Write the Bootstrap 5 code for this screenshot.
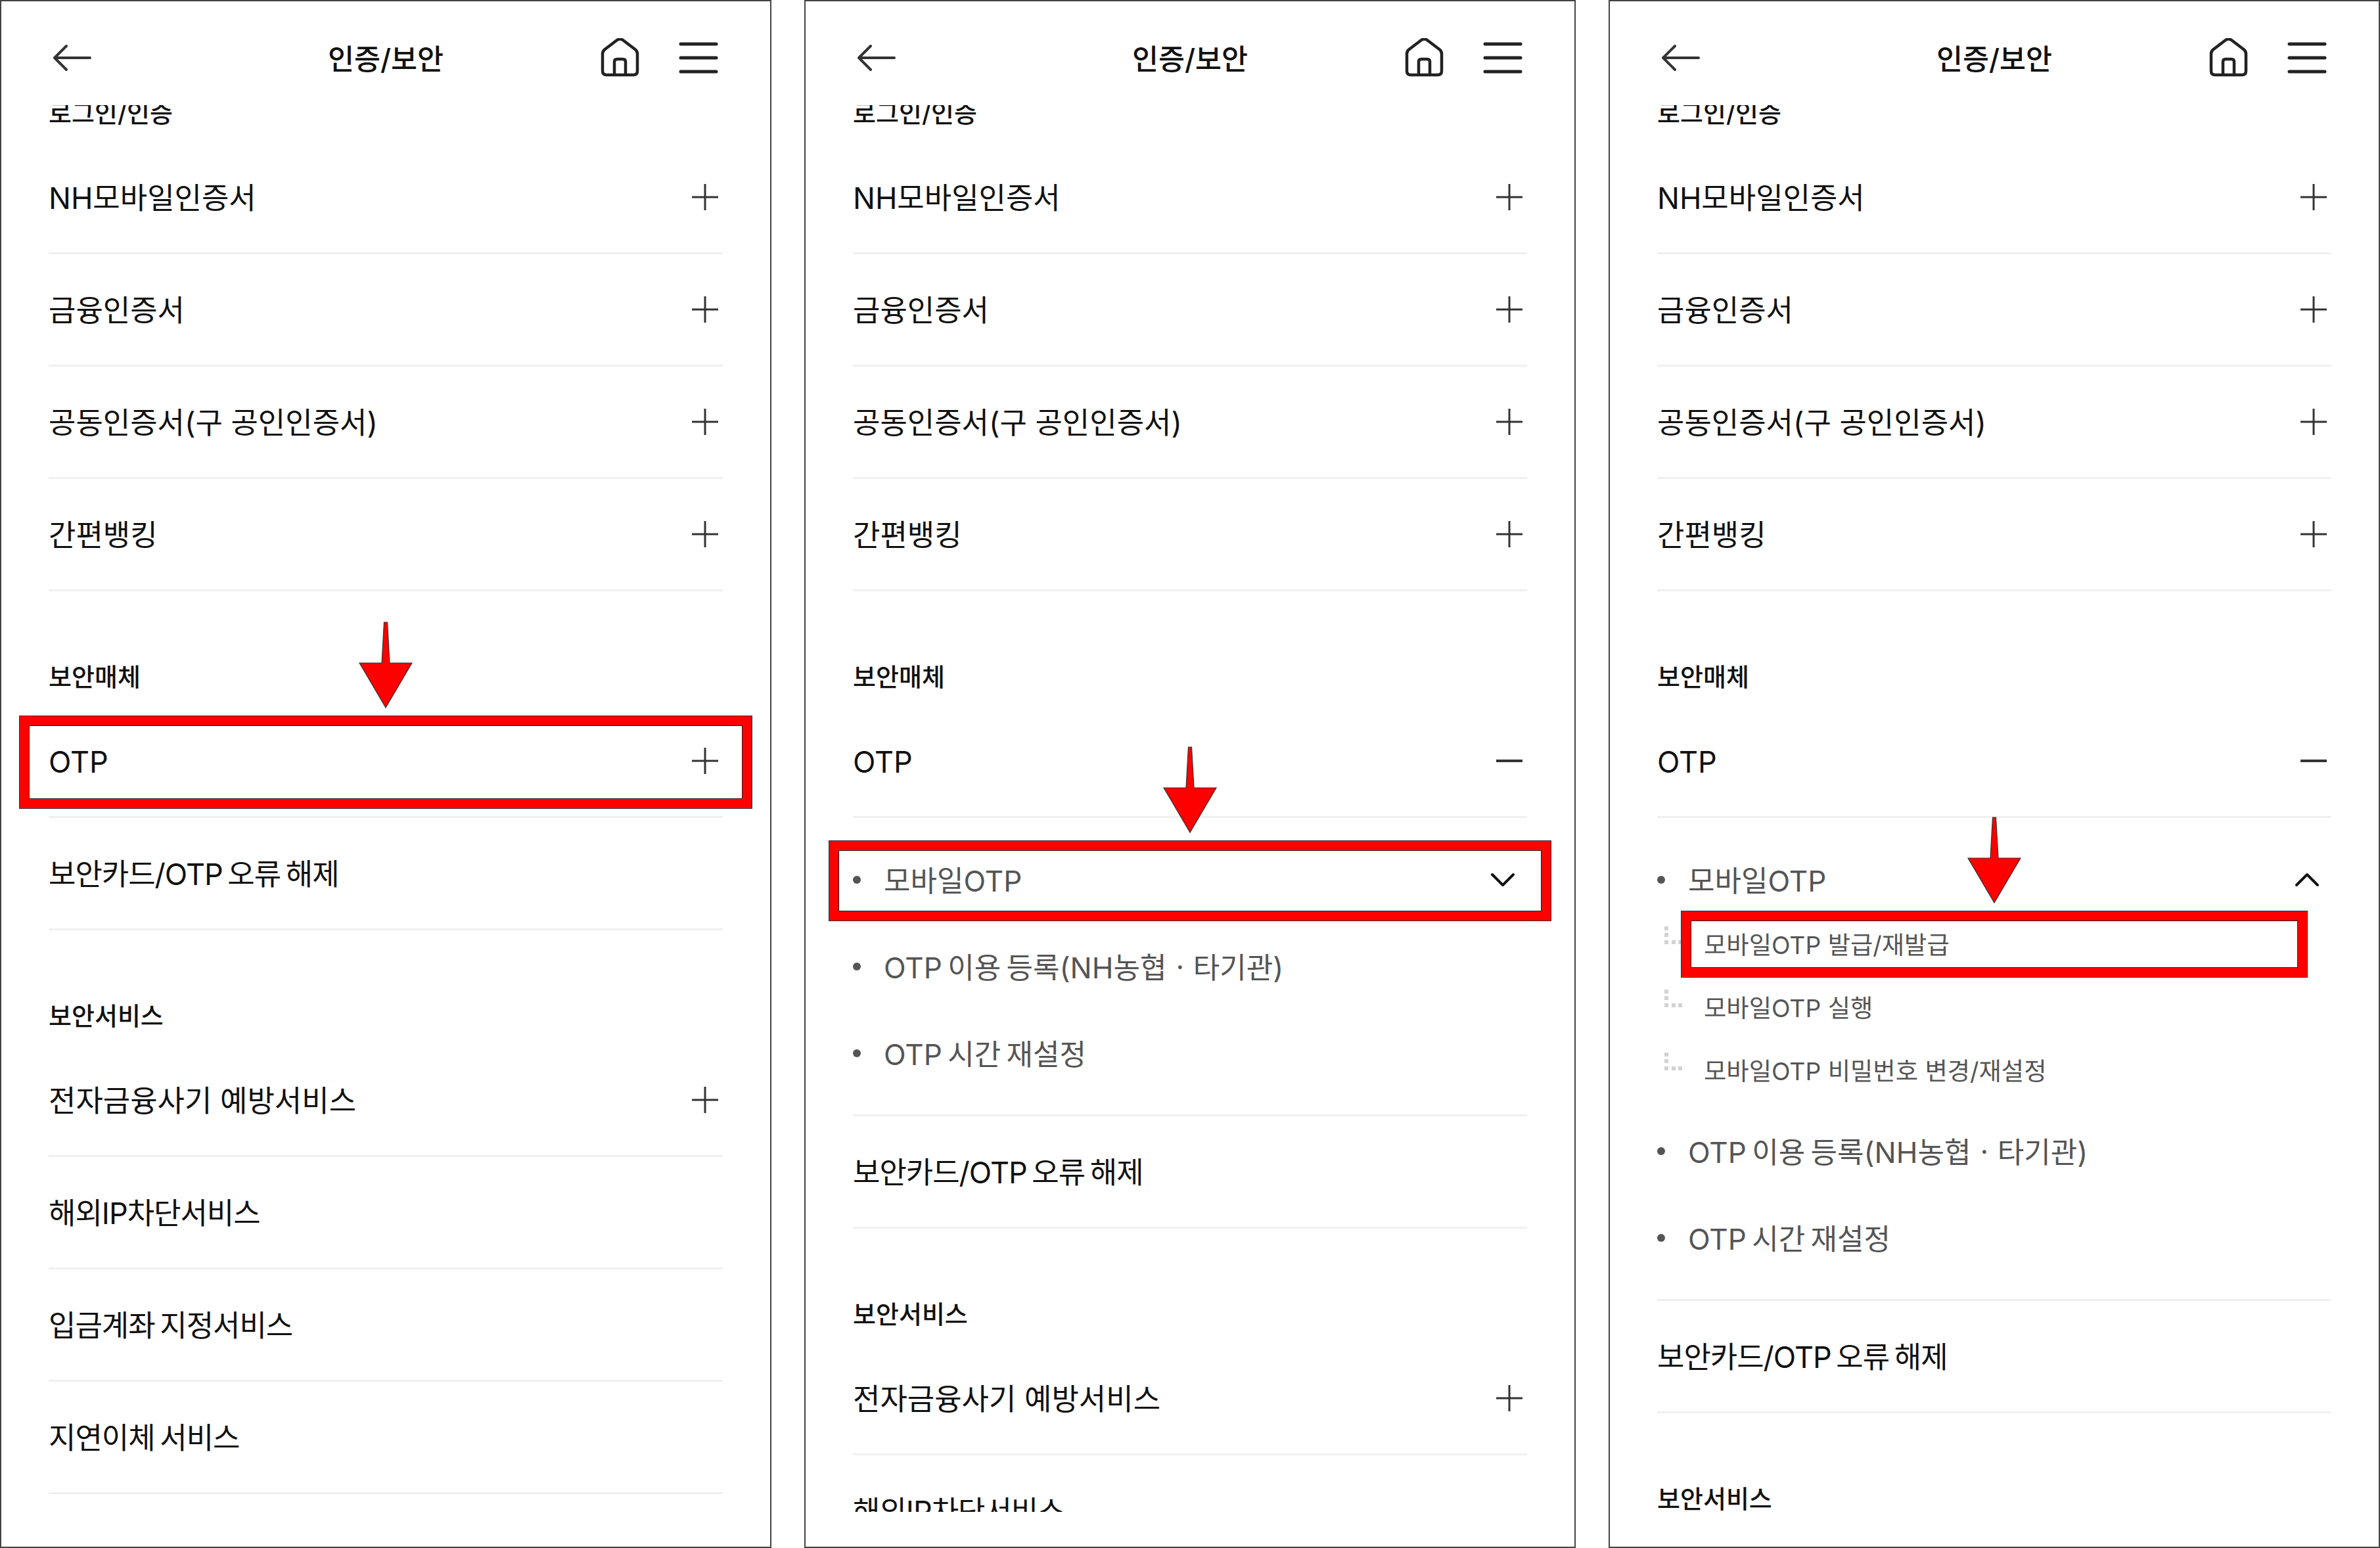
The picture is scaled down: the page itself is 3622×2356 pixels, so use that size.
<!DOCTYPE html>
<html lang="ko">
<head>
<meta charset="utf-8">
<title>인증/보안</title>
<link href="https://cdn.jsdelivr.net/npm/bootstrap@5.3.0/dist/css/bootstrap.min.css" rel="stylesheet">
<style>
html,body{margin:0;background:#fff}
body{font-family:Inter,"Noto Sans CJK KR","Noto Sans",sans-serif;color:#111}
.screens{width:3622px;height:2356px}
.phone{width:1174px;height:2356px;border:2px solid #444;padding-bottom:53px;background:#fff}
.topbar{height:158px;padding:14px 79px 0;flex:none;background:#fff;position:relative}
.bar-title{font-size:43.5px;font-weight:500;line-height:60px;color:#111;position:absolute;left:0;right:0;top:58px;text-align:center}
.bar-icons{gap:59px}
.viewport{flex:1 1 auto;overflow:hidden}
.scrolled{margin-top:-118px}
.sec-head{height:174px;padding:100px 72px 0;font-size:38px;font-weight:500;line-height:60px;color:#111}
.acc-row{height:171px;margin:0 72px;border-bottom:3px solid #f0f0f0;font-size:45px;line-height:60px;color:#111;padding-right:7px;word-spacing:-4px}
.acc-row span,.sub-row span{padding-top:4px}
.tight{letter-spacing:-1px}
.acc-row .roomy{word-spacing:0}
.sub-group{margin:0 72px;border-bottom:3px solid #f0f0f0;padding:28px 0 27px}
.sub-row{height:132px;font-size:44px;line-height:60px;color:#555;padding-right:18px;word-spacing:-4px}
.dot{width:12px;height:12px;border-radius:50%;background:#555;margin-right:35px;flex:none}
.deep{margin-top:-16px;padding-bottom:9px}
.deep-row{height:96px;font-size:37.3px;line-height:50px;color:#555;padding-left:11px}
.deep-row svg{margin-top:21px;margin-right:32px;flex:none}
.deep-row span{padding-top:25px}
.red-box{position:absolute;border:14px solid #f00;outline:1px solid #333;box-shadow:inset 0 0 0 1px #222}
.box-a{left:28px;top:1088px;width:1114px;height:140px}
.box-b{left:36px;top:1278px;width:1098px;height:121px}
.box-c{left:109px;top:1385px;width:952px;height:100px}
.red-arrow{position:absolute;left:543px}
.arrow-a{top:943px}
.arrow-b{top:1133px}
.arrow-c{top:1240px}
</style>
</head>
<body>
<div class="screens d-flex justify-content-between">

<section class="phone position-relative d-flex flex-column">
  <header class="topbar d-flex align-items-center justify-content-between">
    <svg width="62" height="44" viewBox="0 0 62 44" fill="none" stroke="#333" stroke-width="4" stroke-linecap="round" stroke-linejoin="round"><path d="M2 22H56M20 4 2 22 20 40"/></svg>
    <div class="bar-title">인증/보안</div>
    <div class="bar-icons d-flex align-items-center">
      <svg width="60" height="60" viewBox="0 0 60 60" fill="none" stroke="#222" stroke-width="4.5" stroke-linejoin="round"><path d="M3 50V24q0-4 3-6.5L25 3q4.5-3 9 0l19 14.5q3 2.5 3 6.5v26q0 6-6 6H9q-6 0-6-6Z"/><path d="M21 55V36q0-4 4-4h9q4 0 4 4v19"/></svg>
      <svg width="60" height="48" viewBox="0 0 60 48" fill="none" stroke="#222" stroke-width="5" stroke-linecap="round"><path d="M3 3H57M3 24H57M3 45H57"/></svg>
    </div>
  </header>
  <div class="viewport"><div class="scrolled">
    <div class="sec-head">로그인/인증</div>
    <div class="acc-row d-flex align-items-center justify-content-between"><span>NH모바일인증서</span><svg width="40" height="40" viewBox="0 0 40 40" stroke="#333" stroke-width="3"><path d="M20 0V40M0 20H40"/></svg></div>
    <div class="acc-row d-flex align-items-center justify-content-between"><span>금융인증서</span><svg width="40" height="40" viewBox="0 0 40 40" stroke="#333" stroke-width="3"><path d="M20 0V40M0 20H40"/></svg></div>
    <div class="acc-row d-flex align-items-center justify-content-between"><span class="roomy">공동인증서(구 공인인증서)</span><svg width="40" height="40" viewBox="0 0 40 40" stroke="#333" stroke-width="3"><path d="M20 0V40M0 20H40"/></svg></div>
    <div class="acc-row d-flex align-items-center justify-content-between"><span>간편뱅킹</span><svg width="40" height="40" viewBox="0 0 40 40" stroke="#333" stroke-width="3"><path d="M20 0V40M0 20H40"/></svg></div>
    <div class="sec-head">보안매체</div>
    <div class="acc-row d-flex align-items-center justify-content-between"><span>OTP</span><svg width="40" height="40" viewBox="0 0 40 40" stroke="#333" stroke-width="3"><path d="M20 0V40M0 20H40"/></svg></div>
    <div class="acc-row d-flex align-items-center justify-content-between"><span class="tight">보안카드/OTP 오류 해제</span></div>
    <div class="sec-head">보안서비스</div>
    <div class="acc-row d-flex align-items-center justify-content-between"><span class="roomy">전자금융사기 예방서비스</span><svg width="40" height="40" viewBox="0 0 40 40" stroke="#333" stroke-width="3"><path d="M20 0V40M0 20H40"/></svg></div>
    <div class="acc-row d-flex align-items-center justify-content-between"><span class="tight">해외IP차단서비스</span></div>
    <div class="acc-row d-flex align-items-center justify-content-between"><span class="tight">입금계좌 지정서비스</span></div>
    <div class="acc-row d-flex align-items-center justify-content-between"><span class="tight">지연이체 서비스</span></div>
  </div></div>
  <div class="red-box box-a"></div>
  <svg class="red-arrow arrow-a" width="84" height="134" viewBox="0 0 84 134"><path d="M39.5 2h5L48 64H82L42 132 2 64H36Z" fill="#f00" stroke="#333" stroke-width="1.2"/></svg>
</section>

<section class="phone position-relative d-flex flex-column">
  <header class="topbar d-flex align-items-center justify-content-between">
    <svg width="62" height="44" viewBox="0 0 62 44" fill="none" stroke="#333" stroke-width="4" stroke-linecap="round" stroke-linejoin="round"><path d="M2 22H56M20 4 2 22 20 40"/></svg>
    <div class="bar-title">인증/보안</div>
    <div class="bar-icons d-flex align-items-center">
      <svg width="60" height="60" viewBox="0 0 60 60" fill="none" stroke="#222" stroke-width="4.5" stroke-linejoin="round"><path d="M3 50V24q0-4 3-6.5L25 3q4.5-3 9 0l19 14.5q3 2.5 3 6.5v26q0 6-6 6H9q-6 0-6-6Z"/><path d="M21 55V36q0-4 4-4h9q4 0 4 4v19"/></svg>
      <svg width="60" height="48" viewBox="0 0 60 48" fill="none" stroke="#222" stroke-width="5" stroke-linecap="round"><path d="M3 3H57M3 24H57M3 45H57"/></svg>
    </div>
  </header>
  <div class="viewport"><div class="scrolled">
    <div class="sec-head">로그인/인증</div>
    <div class="acc-row d-flex align-items-center justify-content-between"><span>NH모바일인증서</span><svg width="40" height="40" viewBox="0 0 40 40" stroke="#333" stroke-width="3"><path d="M20 0V40M0 20H40"/></svg></div>
    <div class="acc-row d-flex align-items-center justify-content-between"><span>금융인증서</span><svg width="40" height="40" viewBox="0 0 40 40" stroke="#333" stroke-width="3"><path d="M20 0V40M0 20H40"/></svg></div>
    <div class="acc-row d-flex align-items-center justify-content-between"><span class="roomy">공동인증서(구 공인인증서)</span><svg width="40" height="40" viewBox="0 0 40 40" stroke="#333" stroke-width="3"><path d="M20 0V40M0 20H40"/></svg></div>
    <div class="acc-row d-flex align-items-center justify-content-between"><span>간편뱅킹</span><svg width="40" height="40" viewBox="0 0 40 40" stroke="#333" stroke-width="3"><path d="M20 0V40M0 20H40"/></svg></div>
    <div class="sec-head">보안매체</div>
    <div class="acc-row d-flex align-items-center justify-content-between"><span>OTP</span><svg width="40" height="40" viewBox="0 0 40 40" stroke="#333" stroke-width="4"><path d="M0 20H40"/></svg></div>
    <div class="sub-group">
      <div class="sub-row d-flex align-items-center"><i class="dot"></i><span class="flex-grow-1">모바일OTP</span><svg width="38" height="22" viewBox="0 0 38 22" fill="none" stroke="#111" stroke-width="4" stroke-linecap="round" stroke-linejoin="round"><path d="M3 3 19 19 35 3"/></svg></div>
      <div class="sub-row d-flex align-items-center"><i class="dot"></i><span>OTP 이용 등록(NH농협ㆍ타기관)</span></div>
      <div class="sub-row d-flex align-items-center"><i class="dot"></i><span>OTP 시간 재설정</span></div>
    </div>
    <div class="acc-row d-flex align-items-center justify-content-between"><span class="tight">보안카드/OTP 오류 해제</span></div>
    <div class="sec-head">보안서비스</div>
    <div class="acc-row d-flex align-items-center justify-content-between"><span class="roomy">전자금융사기 예방서비스</span><svg width="40" height="40" viewBox="0 0 40 40" stroke="#333" stroke-width="3"><path d="M20 0V40M0 20H40"/></svg></div>
    <div class="acc-row d-flex align-items-center justify-content-between"><span class="tight">해외IP차단서비스</span></div>
  </div></div>
  <div class="red-box box-b"></div>
  <svg class="red-arrow arrow-b" width="84" height="134" viewBox="0 0 84 134"><path d="M39.5 2h5L48 64H82L42 132 2 64H36Z" fill="#f00" stroke="#333" stroke-width="1.2"/></svg>
</section>

<section class="phone position-relative d-flex flex-column">
  <header class="topbar d-flex align-items-center justify-content-between">
    <svg width="62" height="44" viewBox="0 0 62 44" fill="none" stroke="#333" stroke-width="4" stroke-linecap="round" stroke-linejoin="round"><path d="M2 22H56M20 4 2 22 20 40"/></svg>
    <div class="bar-title">인증/보안</div>
    <div class="bar-icons d-flex align-items-center">
      <svg width="60" height="60" viewBox="0 0 60 60" fill="none" stroke="#222" stroke-width="4.5" stroke-linejoin="round"><path d="M3 50V24q0-4 3-6.5L25 3q4.5-3 9 0l19 14.5q3 2.5 3 6.5v26q0 6-6 6H9q-6 0-6-6Z"/><path d="M21 55V36q0-4 4-4h9q4 0 4 4v19"/></svg>
      <svg width="60" height="48" viewBox="0 0 60 48" fill="none" stroke="#222" stroke-width="5" stroke-linecap="round"><path d="M3 3H57M3 24H57M3 45H57"/></svg>
    </div>
  </header>
  <div class="viewport"><div class="scrolled">
    <div class="sec-head">로그인/인증</div>
    <div class="acc-row d-flex align-items-center justify-content-between"><span>NH모바일인증서</span><svg width="40" height="40" viewBox="0 0 40 40" stroke="#333" stroke-width="3"><path d="M20 0V40M0 20H40"/></svg></div>
    <div class="acc-row d-flex align-items-center justify-content-between"><span>금융인증서</span><svg width="40" height="40" viewBox="0 0 40 40" stroke="#333" stroke-width="3"><path d="M20 0V40M0 20H40"/></svg></div>
    <div class="acc-row d-flex align-items-center justify-content-between"><span class="roomy">공동인증서(구 공인인증서)</span><svg width="40" height="40" viewBox="0 0 40 40" stroke="#333" stroke-width="3"><path d="M20 0V40M0 20H40"/></svg></div>
    <div class="acc-row d-flex align-items-center justify-content-between"><span>간편뱅킹</span><svg width="40" height="40" viewBox="0 0 40 40" stroke="#333" stroke-width="3"><path d="M20 0V40M0 20H40"/></svg></div>
    <div class="sec-head">보안매체</div>
    <div class="acc-row d-flex align-items-center justify-content-between"><span>OTP</span><svg width="40" height="40" viewBox="0 0 40 40" stroke="#333" stroke-width="4"><path d="M0 20H40"/></svg></div>
    <div class="sub-group">
      <div class="sub-row d-flex align-items-center"><i class="dot"></i><span class="flex-grow-1">모바일OTP</span><svg width="38" height="22" viewBox="0 0 38 22" fill="none" stroke="#111" stroke-width="4" stroke-linecap="round" stroke-linejoin="round"><path d="M3 19 19 3 35 19"/></svg></div>
      <div class="deep">
        <div class="deep-row d-flex"><svg width="28" height="28" viewBox="0 0 28 28" fill="#d2d2d2"><rect width="6" height="6"/><rect y="10" width="6" height="6"/><rect y="21" width="6" height="6"/><rect x="11" y="21" width="6" height="6"/><rect x="21" y="21" width="6" height="6"/></svg><span>모바일OTP 발급/재발급</span></div>
        <div class="deep-row d-flex"><svg width="28" height="28" viewBox="0 0 28 28" fill="#d2d2d2"><rect width="6" height="6"/><rect y="10" width="6" height="6"/><rect y="21" width="6" height="6"/><rect x="11" y="21" width="6" height="6"/><rect x="21" y="21" width="6" height="6"/></svg><span>모바일OTP 실행</span></div>
        <div class="deep-row d-flex"><svg width="28" height="28" viewBox="0 0 28 28" fill="#d2d2d2"><rect width="6" height="6"/><rect y="10" width="6" height="6"/><rect y="21" width="6" height="6"/><rect x="11" y="21" width="6" height="6"/><rect x="21" y="21" width="6" height="6"/></svg><span>모바일OTP 비밀번호 변경/재설정</span></div>
      </div>
      <div class="sub-row d-flex align-items-center"><i class="dot"></i><span>OTP 이용 등록(NH농협ㆍ타기관)</span></div>
      <div class="sub-row d-flex align-items-center"><i class="dot"></i><span>OTP 시간 재설정</span></div>
    </div>
    <div class="acc-row d-flex align-items-center justify-content-between"><span class="tight">보안카드/OTP 오류 해제</span></div>
    <div class="sec-head">보안서비스</div>
  </div></div>
  <div class="red-box box-c"></div>
  <svg class="red-arrow arrow-c" width="84" height="134" viewBox="0 0 84 134"><path d="M39.5 2h5L48 64H82L42 132 2 64H36Z" fill="#f00" stroke="#333" stroke-width="1.2"/></svg>
</section>

</div>
<script src="https://cdn.jsdelivr.net/npm/bootstrap@5.3.0/dist/js/bootstrap.bundle.min.js"></script>
</body>
</html>
